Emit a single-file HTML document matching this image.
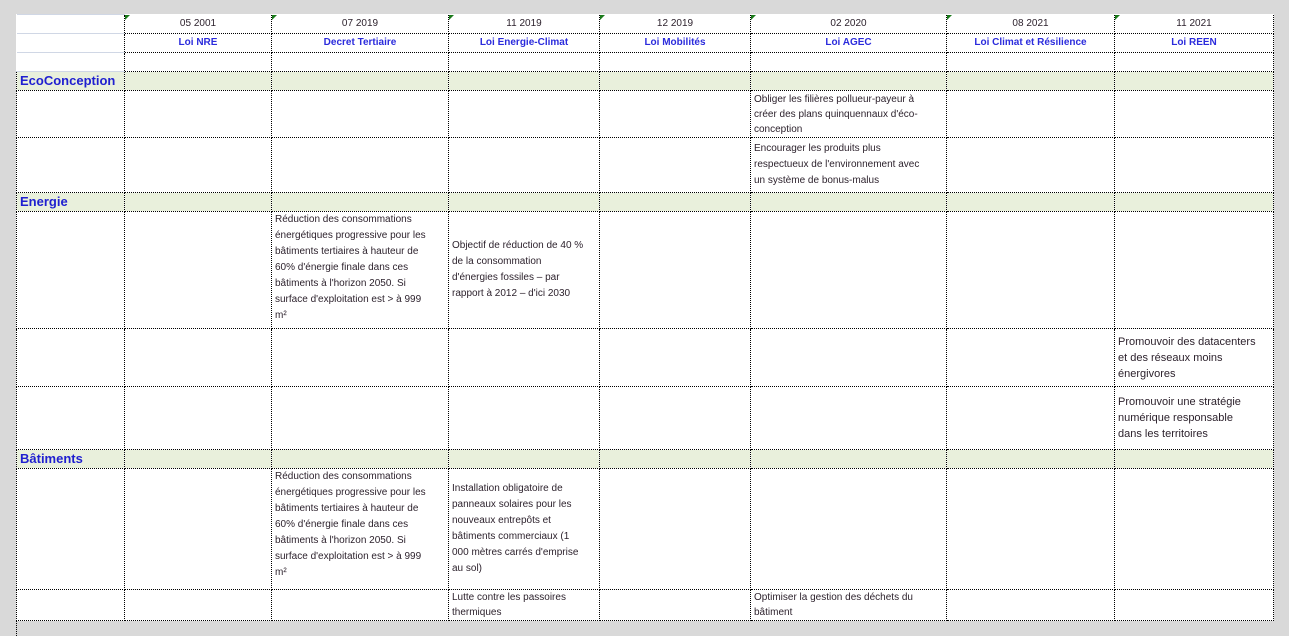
<!DOCTYPE html>
<html><head><meta charset="utf-8"><style>
body{margin:0;width:1289px;height:636px;background:#d9d9d9;overflow:hidden;font-family:"Liberation Sans",sans-serif;}
table{position:absolute;left:16px;top:14px;border-collapse:collapse;table-layout:fixed;background:#fff;}
td{border:1px dotted #000;padding:0 3px;font-size:10px;line-height:16px;color:#2a1f2a;vertical-align:middle;overflow:hidden;white-space:nowrap;}
td.t{vertical-align:top;padding-top:0}
td.c{line-height:15px}
td.p{padding-top:1px}
tr.h td{text-align:center;}
tr.h td:first-child,tr.l td:first-child{border-left:none;border-top:1px solid #d0d7e5;border-bottom:1px solid #d0d7e5;}
tr.first td{border-top:none}
.law{color:#2b2bdc;font-weight:bold;}
tr.s td{background:#e9f0dc;}
tr.s td:first-child{color:#1f1fd0;font-size:13px;font-weight:bold;padding-left:3px;line-height:16px}
.tri{position:relative}
.tri:before{content:"";position:absolute;left:0;top:0;border-top:5px solid #1a7a1a;border-right:5px solid transparent;}
</style></head><body>
<table>
<colgroup><col style="width:108px"><col style="width:147px"><col style="width:177px"><col style="width:151px"><col style="width:151px"><col style="width:196px"><col style="width:168px"><col style="width:159px"></colgroup>
<tr class="h first" style="height:19px"><td></td><td class="tri">05 2001</td><td class="tri">07 2019</td><td class="tri">11 2019</td><td class="tri">12 2019</td><td class="tri">02 2020</td><td class="tri">08 2021</td><td class="tri">11 2021</td></tr>
<tr class="h" style="height:19px"><td></td><td class="law">Loi NRE</td><td class="law">Decret Tertiaire</td><td class="law">Loi Energie-Climat</td><td class="law">Loi Mobilités</td><td class="law">Loi AGEC</td><td class="law">Loi Climat et Résilience</td><td class="law">Loi REEN</td></tr>
<tr class="l" style="height:19px"><td></td><td></td><td></td><td></td><td></td><td></td><td></td><td></td></tr>
<tr class="s" style="height:19px"><td>EcoConception</td><td></td><td></td><td></td><td></td><td></td><td></td><td></td></tr>
<tr style="height:47px"><td></td><td></td><td></td><td></td><td></td><td class="t c p">Obliger les filières pollueur-payeur à<br>créer des plans quinquennaux d'éco-<br>conception</td><td></td><td></td></tr>
<tr style="height:55px"><td></td><td></td><td></td><td></td><td></td><td>Encourager les produits plus<br>respectueux de l'environnement avec<br>un système de bonus-malus</td><td></td><td></td></tr>
<tr class="s" style="height:19px"><td>Energie</td><td></td><td></td><td></td><td></td><td></td><td></td><td></td></tr>
<tr style="height:117px"><td></td><td></td><td class="t">Réduction des consommations<br>énergétiques progressive pour les<br>bâtiments tertiaires à hauteur de<br>60% d'énergie finale dans ces<br>bâtiments à l'horizon 2050. Si<br>surface d'exploitation est &gt; à 999<br>m²</td><td>Objectif de réduction de 40 %<br>de la consommation<br>d'énergies fossiles – par<br>rapport à 2012 – d'ici 2030</td><td></td><td></td><td></td><td></td></tr>
<tr style="height:58px"><td></td><td></td><td></td><td></td><td></td><td></td><td></td><td style="font-size:11px">Promouvoir des datacenters<br>et des réseaux moins<br>énergivores</td></tr>
<tr style="height:63px"><td></td><td></td><td></td><td></td><td></td><td></td><td></td><td style="font-size:11px">Promouvoir une stratégie<br>numérique responsable<br>dans les territoires</td></tr>
<tr class="s" style="height:19px"><td>Bâtiments</td><td></td><td></td><td></td><td></td><td></td><td></td><td></td></tr>
<tr style="height:121px"><td></td><td></td><td class="t">Réduction des consommations<br>énergétiques progressive pour les<br>bâtiments tertiaires à hauteur de<br>60% d'énergie finale dans ces<br>bâtiments à l'horizon 2050. Si<br>surface d'exploitation est &gt; à 999<br>m²</td><td>Installation obligatoire de<br>panneaux solaires pour les<br>nouveaux entrepôts et<br>bâtiments commerciaux (1<br>000 mètres carrés d'emprise<br>au sol)</td><td></td><td></td><td></td><td></td></tr>
<tr style="height:31px"><td></td><td></td><td></td><td class="c">Lutte contre les passoires<br>thermiques</td><td></td><td class="c">Optimiser la gestion des déchets du<br>bâtiment</td><td></td><td></td></tr>
</table>
<div style="position:absolute;left:16px;top:621px;height:15px;border-left:1px dotted #000"></div>
</body></html>
